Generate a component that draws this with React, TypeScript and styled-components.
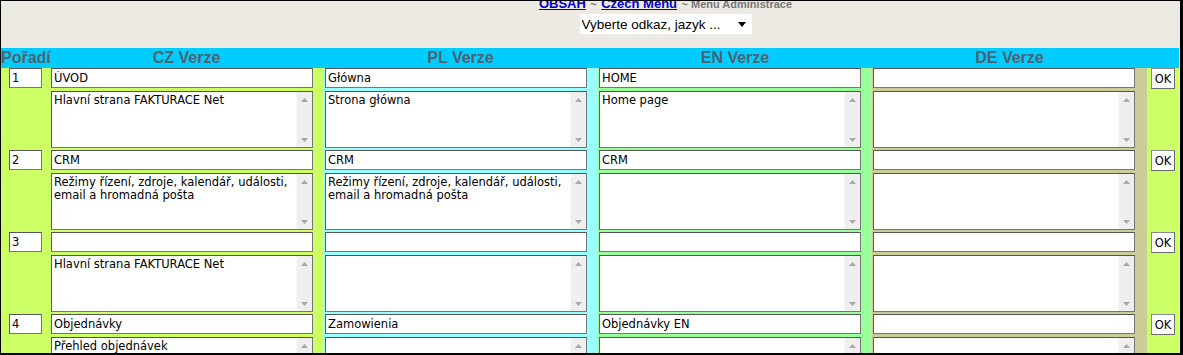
import React from "react";
import styled, { createGlobalStyle } from "styled-components";

const GlobalStyle = createGlobalStyle`
  html, body {
    margin: 0;
    padding: 0;
    background: #ffffff;
  }
  body {
    font-family: "Liberation Sans", Arial, sans-serif;
  }
`;

type Lang = "cz" | "pl" | "en" | "de";

const colors: Record<Lang | "num" | "ok", string> = {
  num: "#ccff66",
  cz: "#ccff66",
  pl: "#99ffff",
  en: "#99ff99",
  de: "#cccc99",
  ok: "#ccff66",
};

interface Item {
  order: string;
  titles: Record<Lang, string>;
  texts: Record<Lang, string>;
}

const items: Item[] = [
  {
    order: "1",
    titles: { cz: "ÚVOD", pl: "Główna", en: "HOME", de: "" },
    texts: { cz: "Hlavní strana FAKTURACE Net", pl: "Strona główna", en: "Home page", de: "" },
  },
  {
    order: "2",
    titles: { cz: "CRM", pl: "CRM", en: "CRM", de: "" },
    texts: {
      cz: "Režimy řízení, zdroje, kalendář, události, email a hromadná pošta",
      pl: "Režimy řízení, zdroje, kalendář, události, email a hromadná pošta",
      en: "",
      de: "",
    },
  },
  {
    order: "3",
    titles: { cz: "", pl: "", en: "", de: "" },
    texts: { cz: "Hlavní strana FAKTURACE Net", pl: "", en: "", de: "" },
  },
  {
    order: "4",
    titles: { cz: "Objednávky", pl: "Zamowienia", en: "Objednávky EN", de: "" },
    texts: {
      cz: "Přehled objednávek\nTříděné přehledy objednávek",
      pl: "",
      en: "",
      de: "",
    },
  },
];

const langs: Lang[] = ["cz", "pl", "en", "de"];

const Frame = styled.div`
  width: 1183px;
  height: 355px;
  box-sizing: border-box;
  border-style: solid;
  border-color: #000;
  border-width: 1px 3px 2px 1px;
  background: #eceae2;
  overflow: hidden;
`;

const TopBar = styled.div`
  height: 47px;
  padding-left: 150px;
  display: flex;
  flex-direction: column;
  align-items: center;
`;

const Crumbs = styled.div`
  margin-top: -6px;
  line-height: 15px;
  font-weight: bold;
  white-space: nowrap;
`;

const CrumbLink = styled.a`
  font-size: 13px;
  color: #0000cc;
  text-decoration: underline;
`;

const CrumbText = styled.span`
  font-size: 11px;
  color: #777777;
`;

const SelectWrap = styled.div`
  position: relative;
  margin-top: 2px;
  width: 172px;
  height: 20px;
`;

const Select = styled.select`
  appearance: none;
  width: 172px;
  height: 20px;
  border: none;
  background: #ffffff;
  padding: 0 0 0 2px;
  font-family: "Liberation Sans", Arial, sans-serif;
  font-size: 13.5px;
  color: #000;
  outline: none;
`;

const SelectArrow = styled.svg`
  position: absolute;
  right: 6px;
  top: 8px;
  pointer-events: none;
`;

const Table = styled.div`
  width: 1178px;
`;

const Grid = styled.div`
  display: grid;
  grid-template-columns: 49px 273px 275px 274px 275px 32px;
`;

const HeadRow = styled(Grid)`
  height: 20px;
  background: #00ccff;
`;

const HeadCell = styled.div`
  font-size: 16px;
  font-weight: bold;
  color: #4d6270;
  text-align: center;
  line-height: 20px;
  white-space: nowrap;
`;

const ItemRow = styled(Grid)`
  grid-template-rows: 23px 59px;
  background: ${colors.ok};
`;

const NumCell = styled.div`
  grid-column: 1;
  grid-row: 1 / span 2;
  background: ${colors.num};
  display: flex;
  justify-content: center;
  align-items: flex-start;
`;

const LangCell = styled.div<{ $lang: Lang; $col: number; $row: number }>`
  grid-column: ${(p) => p.$col};
  grid-row: ${(p) => p.$row};
  background: ${(p) => colors[p.$lang]};
  padding-left: ${(p) => (p.$lang === "pl" ? 2 : 1)}px;
`;

const OkCell = styled.div`
  grid-column: 6;
  grid-row: 1 / span 2;
  background: ${colors.ok};
  display: flex;
  justify-content: center;
  align-items: flex-start;
`;

const TextInput = styled.input<{ $w?: number }>`
  box-sizing: border-box;
  width: ${(p) => p.$w ?? 262}px;
  height: 20px;
  margin: 0;
  border: 1px solid #767676;
  border-top-color: #555;
  border-left-color: #5e5e5e;
  background: #ffffff;
  padding: 0 2px;
  font-family: "DejaVu Sans", Verdana, sans-serif;
  font-size: 11.5px;
  color: #000;
  outline: none;
`;

const AreaBox = styled.div`
  box-sizing: border-box;
  width: 262px;
  height: 57px;
  display: flex;
  border: 1px solid #767676;
  border-top-color: #555;
  border-left-color: #5e5e5e;
  background: #ffffff;
`;

const Area = styled.textarea`
  flex: 1;
  min-width: 0;
  border: none;
  resize: none;
  margin: 0;
  padding: 2px 2px;
  font-family: "DejaVu Sans", Verdana, sans-serif;
  font-size: 11.5px;
  line-height: 13px;
  color: #000;
  background: transparent;
  overflow: hidden;
  outline: none;
`;

const ScrollTrack = styled.div`
  width: 15px;
  background: #efefef;
  border-left: 1px solid #f7f7f7;
  display: flex;
  flex-direction: column;
  justify-content: space-between;
  align-items: center;
  padding: 6px 0 5px;
`;

const OkButton = styled.button`
  box-sizing: border-box;
  width: 24px;
  height: 21px;
  margin: 0;
  padding: 0;
  border: 1px solid #8a8a8a;
  border-right-color: #6a6a6a;
  border-bottom-color: #6a6a6a;
  background: #ffffff;
  font-family: "DejaVu Sans", Verdana, sans-serif;
  font-size: 11.5px;
  color: #000;
`;

function Arrow({ up }: { up?: boolean }) {
  return (
    <svg width="7" height="4" viewBox="0 0 7 4">
      <path d={up ? "M0 4 L3.5 0 L7 4 Z" : "M0 0 L3.5 4 L7 0 Z"} fill="#a8a8a8" />
    </svg>
  );
}

function TextArea({ value }: { value: string }) {
  return (
    <AreaBox>
      <Area defaultValue={value} />
      <ScrollTrack>
        <Arrow up />
        <Arrow />
      </ScrollTrack>
    </AreaBox>
  );
}

export default function App() {
  return (
    <Frame>
      <GlobalStyle />
      <TopBar>
        <Crumbs>
          <CrumbLink href="#">OBSAH</CrumbLink> <CrumbText>~</CrumbText>{" "}
          <CrumbLink href="#">Czech Menu</CrumbLink> <CrumbText>~ Menu Administrace</CrumbText>
        </Crumbs>
        <SelectWrap>
          <Select defaultValue="">
            <option value="">Vyberte odkaz, jazyk ...</option>
          </Select>
          <SelectArrow width="8" height="5" viewBox="0 0 8 5">
            <path d="M0 0 L8 0 L4 5 Z" fill="#000" />
          </SelectArrow>
        </SelectWrap>
      </TopBar>

      <Table>
        <HeadRow>
          <HeadCell>Pořadí</HeadCell>
          <HeadCell>CZ Verze</HeadCell>
          <HeadCell>PL Verze</HeadCell>
          <HeadCell>EN Verze</HeadCell>
          <HeadCell>DE Verze</HeadCell>
          <HeadCell />
        </HeadRow>

        {items.map((item) => (
          <ItemRow key={item.order}>
            <NumCell>
              <TextInput $w={33} defaultValue={item.order} />
            </NumCell>
            {langs.map((l, i) => (
              <LangCell key={l + "t"} $lang={l} $col={i + 2} $row={1}>
                <TextInput defaultValue={item.titles[l]} />
              </LangCell>
            ))}
            {langs.map((l, i) => (
              <LangCell key={l + "a"} $lang={l} $col={i + 2} $row={2}>
                <TextArea value={item.texts[l]} />
              </LangCell>
            ))}
            <OkCell>
              <OkButton>OK</OkButton>
            </OkCell>
          </ItemRow>
        ))}
      </Table>
    </Frame>
  );
}
